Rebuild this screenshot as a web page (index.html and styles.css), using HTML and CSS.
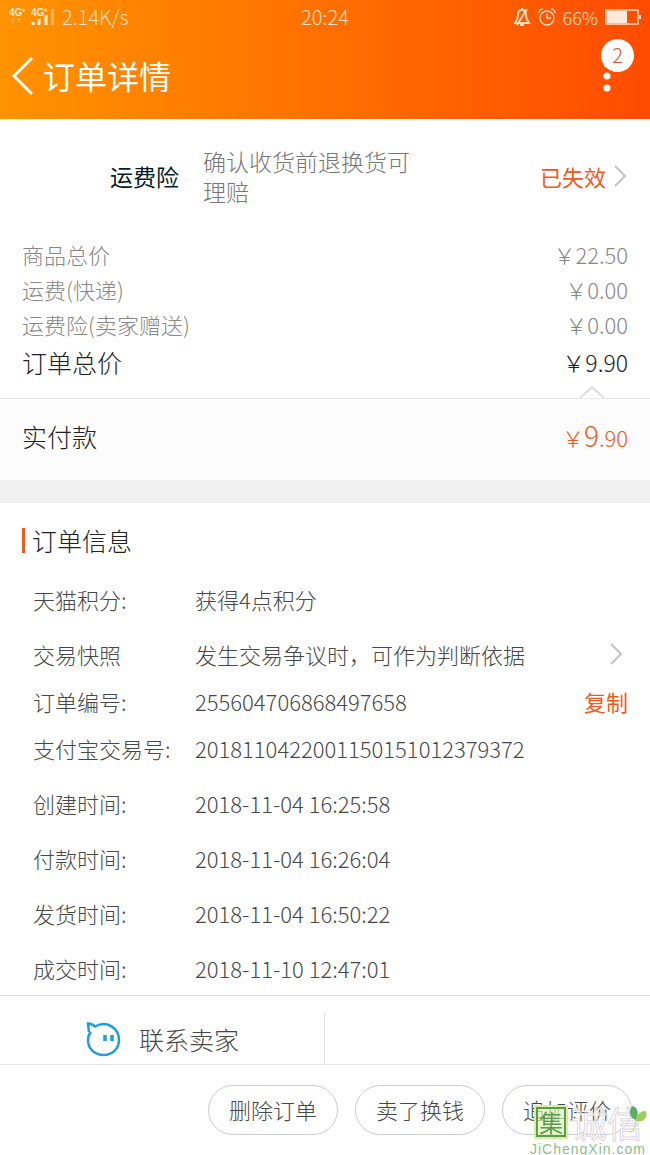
FILE: index.html
```html
<!DOCTYPE html>
<html lang="zh-CN">
<head>
  <meta charset="UTF-8">
  <meta name="viewport" content="width=device-width, initial-scale=1.0">
  <title>订单详情</title>
  <link rel="stylesheet" href="styles.css">
</head>
<body>
  <header class="header">
    <div class="status-bar">
      <div class="status-left">
        <svg class="signal" width="46" height="20" viewBox="0 0 46 20">
          <text x="0" y="9" class="signal-text">4G⁺</text>
          <text x="22" y="9" class="signal-text">4G⁺</text>
          <path d="M4 11v5M2 14l2 2 2-2M10 16v-5M8 13l2-2 2 2" class="signal-arrows" />
          <path d="M24 18v-3M30 18v-6M37 18V8" class="signal-bars" />
          <path d="M43.500 18V2" class="signal-off" />
        </svg>
        <span>2.14K/s</span>
      </div>
      <span class="clock">20:24</span>
      <div class="status-right">
        <svg width="18" height="20" viewBox="0 0 18 20" fill="none" stroke="#ffe0c4" stroke-width="1.800">
          <path d="M9 3c-3 0-4 2-4 5 0 4-1 5-3 8h14c-2-3-3-4-3-8 0-3-1-5-4-5zM8 2h2M7 18h4M14 2L4 18" />
        </svg>
        <svg width="18" height="20" viewBox="0 0 18 20" fill="none" stroke="#ffe0c4" stroke-width="1.300">
          <circle cx="9" cy="11" r="7" />
          <path d="M9 6v5h4M1 6c0-3 2-4 4-4M17 6c0-3-2-4-4-4" />
        </svg>
        <span class="percent">66%</span>
        <svg width="36" height="16" viewBox="0 0 36 16">
          <rect x="1" y="1" width="32" height="14" fill="none" stroke="#ffe0c4" stroke-width="1.500" />
          <path d="M2 2h20v12H2z" fill="#ffeadd" />
          <path d="M35 6v4" stroke="#ffe0c4" stroke-width="2" />
        </svg>
      </div>
    </div>
    <div class="title-bar">
      <button class="back" aria-label="返回">
        <svg width="22" height="40" viewBox="0 0 22 40" fill="none" stroke="#fff" stroke-width="3">
          <path d="M20 2L2 20l18 18" />
        </svg>
      </button>
      <h1>订单详情</h1>
      <button class="more" aria-label="更多">
        <svg width="8" height="32" viewBox="0 0 8 32" fill="#fff">
          <circle cx="4" cy="4" r="3.500" />
          <circle cx="4" cy="16" r="3.500" />
          <circle cx="4" cy="28" r="3.500" />
        </svg>
        <span class="badge">2</span>
      </button>
    </div>
  </header>

  <main>
    <a class="insurance" href="#">
      <span class="insurance-name">运费险</span>
      <span class="insurance-desc">确认收货前退换货可理赔</span>
      <span class="insurance-state">已失效</span>
      <svg class="arrow" width="12" height="22" viewBox="0 0 12 22"><path d="M1 1l10 10L1 21" /></svg>
    </a>

    <section class="prices">
      <div class="price-row"><span>商品总价</span><span>￥22.50</span></div>
      <div class="price-row"><span>运费(快递)</span><span>￥0.00</span></div>
      <div class="price-row"><span>运费险(卖家赠送)</span><span>￥0.00</span></div>
      <div class="price-row total"><span>订单总价</span><span class="amount">￥9.90</span></div>
    </section>

    <section class="paid">
      <svg class="notch" width="24" height="13" viewBox="0 0 24 13"><path d="M0 12L12 1l12 11" /></svg>
      <span>实付款</span>
      <span class="paid-price">￥<b>9</b>.90</span>
    </section>

    <section class="info">
      <h2>订单信息</h2>
      <dl>
        <div class="info-row"><dt>天猫积分:</dt><dd>获得4点积分</dd></div>
        <div class="info-row spaced">
          <dt>交易快照</dt>
          <dd>发生交易争议时，可作为判断依据</dd>
          <dd class="side"><svg class="arrow" width="12" height="22" viewBox="0 0 12 22"><path d="M1 1l10 10L1 21" /></svg></dd>
        </div>
        <div class="info-row">
          <dt>订单编号:</dt>
          <dd>255604706868497658</dd>
          <dd class="side"><button class="copy">复制</button></dd>
        </div>
        <div class="info-row"><dt>支付宝交易号:</dt><dd>2018110422001150151012379372</dd></div>
        <div class="info-row spaced"><dt>创建时间:</dt><dd>2018-11-04 16:25:58</dd></div>
        <div class="info-row spaced"><dt>付款时间:</dt><dd>2018-11-04 16:26:04</dd></div>
        <div class="info-row spaced"><dt>发货时间:</dt><dd>2018-11-04 16:50:22</dd></div>
        <div class="info-row spaced"><dt>成交时间:</dt><dd>2018-11-10 12:47:01</dd></div>
      </dl>
    </section>
  </main>

  <footer class="footer">
    <div class="contact">
      <button class="contact-seller">
        <svg width="36" height="36" viewBox="0 0 36 36" fill="none" stroke="#1b9fe0" stroke-width="2.500">
          <path d="M4 11L3 2.500c3 0 5 1 7 3C22-1 34 7 34 19c0 9-7 15-15.500 15S3 28 3 19c0-3 1-6 3-8" />
          <path d="M20 14v6M27 14v6" stroke-width="3.500" />
        </svg>
        联系卖家
      </button>
    </div>
    <div class="actions">
      <button class="pill">删除订单</button>
      <button class="pill">卖了换钱</button>
      <button class="pill">追加评价</button>
    </div>
    <div class="watermark">
      <div class="mark-top">
        <span class="mark-box">集</span>
        <span class="mark-name">诚信</span>
        <svg class="leaf" width="18" height="28" viewBox="0 0 18 28">
          <path d="M7 14C0 12-1 3 4 0c5 2 6 7 3 14z" fill="#5dae62" />
          <path d="M7 15C8 8 12 5 17 5c2 7-3 12-10 10z" fill="#9bcf55" />
          <path d="M7 14c0 6-2 10-6 13" fill="none" stroke="#a9d779" />
        </svg>
      </div>
      <div class="mark-url">JiChengXin.com</div>
    </div>
  </footer>
</body>
</html>
```

FILE: styles.css
```css
* {
  box-sizing: border-box;
}

body {
  margin: 0;
  min-height: 100vh;
  display: flex;
  flex-direction: column;
  font-family: "Noto Sans CJK SC", sans-serif;
  font-weight: 300;
  font-size: 22px;
  line-height: 30px;
  color: #484848;
  background-color: #fff;
}

main {
  flex: 1;
}

h1, h2, dl, dd {
  margin: 0;
  font-weight: 300;
}

button {
  font: inherit;
  color: inherit;
  background: none;
  border: none;
  padding: 0;
  cursor: pointer;
}

svg {
  display: block;
  flex-shrink: 0;
}

/* header */
.header {
  background: linear-gradient(to right, #ff9300, #ff4c00);
  color: #fff;
}

.status-bar {
  display: grid;
  grid-template-columns: 1fr auto 1fr;
  align-items: center;
  height: 33px;
  padding: 0 9px;
  font-size: 20px;
  color: #ffe0c4;
}

.status-left, .status-right {
  display: flex;
  align-items: center;
  gap: 7px;
}

.status-right {
  justify-content: flex-end;
}

.percent {
  font-size: 18px;
}

.signal-text {
  font: bold 10px "Liberation Sans", sans-serif;
  fill: #ffe8d0;
}

.signal-arrows {
  fill: none;
  stroke: #ffbf78;
}

.signal-bars {
  stroke: #fff0e0;
  stroke-width: 3;
}

.signal-off {
  stroke: #ffb766;
  stroke-width: 3;
}

.title-bar {
  display: flex;
  align-items: center;
  height: 86px;
  padding: 0 39px 0 12px;
}

.title-bar h1 {
  flex: 1;
  margin-left: 9px;
  padding-bottom: 3px;
  font-size: 32px;
  font-weight: 400;
  line-height: 40px;
}

.more {
  position: relative;
}

.badge {
  position: absolute;
  left: -2px;
  bottom: 20px;
  width: 33px;
  height: 33px;
  border-radius: 50%;
  background-color: #fff;
  color: #d9552b;
  font-size: 20px;
  line-height: 31px;
}

/* shipping insurance */
.insurance {
  display: flex;
  align-items: center;
  min-height: 114px;
  padding: 0 24px 0 110px;
  font-size: 23px;
  color: #051b28;
  text-decoration: none;
}

.insurance-name {
  font-weight: 400;
}

.insurance-desc {
  max-width: 210px;
  margin-left: 24px;
  color: #777;
}

.insurance-state {
  margin-left: auto;
  font-size: 22px;
  font-weight: 400;
  color: #f05a1a;
}

.arrow {
  margin-left: 8px;
  fill: none;
  stroke: #c4c4c4;
  stroke-width: 2;
}

/* prices */
.prices {
  padding: 4px 22px 16px;
  color: #888;
}

.price-row {
  display: flex;
  justify-content: space-between;
  line-height: 35px;
}

.total {
  font-size: 25px;
  line-height: 40px;
  color: #222;
}

.amount {
  font-size: 23px;
}

.paid {
  position: relative;
  display: flex;
  align-items: center;
  justify-content: space-between;
  min-height: 82px;
  padding: 0 22px 8px;
  border-top: 1px solid #e8e8e8;
  background-color: #fcfcfc;
  font-size: 25px;
  color: #222;
}

.notch {
  position: absolute;
  top: -13px;
  right: 46px;
  fill: #fff;
  stroke: #ddd;
  stroke-width: 2;
}

.paid-price {
  font-size: 22px;
  color: #f05a1a;
}

.paid-price b {
  font-size: 28px;
  font-weight: 300;
}

/* order info */
.info {
  padding: 25px 22px 2px;
  border-top: 23px solid #f0f0f0;
}

.info h2 {
  margin-bottom: 22px;
  padding-left: 7px;
  border-left: 3px solid #f05a1a;
  font-size: 25px;
  line-height: 25px;
  color: #222;
}

.info-row {
  display: flex;
  align-items: center;
  min-height: 47px;
  padding-left: 11px;
}

.spaced {
  margin-top: 8px;
}

.info-row dt {
  width: 162px;
}

.side {
  margin-left: auto;
}

.side .arrow {
  margin-right: 6px;
}

.copy {
  font-weight: 400;
  color: #f05a1a;
}

/* footer */
.footer {
  position: relative;
  border-top: 1px solid #ddd;
}

.contact {
  display: flex;
  align-items: flex-end;
  border-bottom: 1px solid #e5e5e5;
}

.contact-seller {
  display: flex;
  align-items: center;
  justify-content: center;
  gap: 18px;
  width: 50%;
  height: 51px;
  margin-top: 17px;
  border-right: 1px solid #ddd;
  font-size: 25px;
}

.actions {
  display: flex;
  justify-content: flex-end;
  gap: 17px;
  padding: 20px 18px;
}

.pill {
  width: 130px;
  height: 50px;
  padding-bottom: 2px;
  border: 1px solid #ccc;
  border-radius: 25px;
}

.watermark {
  position: absolute;
  right: 0;
  bottom: -3px;
  width: 120px;
  pointer-events: none;
}

.mark-top {
  display: flex;
  align-items: center;
  gap: 5px;
}

.mark-box {
  width: 30px;
  height: 30px;
  margin-left: 6px;
  border: 2px solid #5c9a55;
  outline: 2px solid #d6f0a0;
  background-color: rgba(225, 247, 180, 0.7);
  color: #5c9a55;
  font-size: 24px;
  font-weight: 400;
  line-height: 26px;
  text-align: center;
}

.mark-name {
  color: rgba(255, 255, 255, 0.5);
  font-size: 36px;
  font-weight: 400;
  line-height: 36px;
  -webkit-text-stroke: 1px #ddd6df;
}

.leaf {
  position: absolute;
  top: 2px;
  right: 3px;
}

.mark-url {
  color: #8cc08c;
  font-family: "Liberation Sans", sans-serif;
  font-size: 14px;
  font-weight: 400;
  line-height: 18px;
  letter-spacing: 1px;
}
```
